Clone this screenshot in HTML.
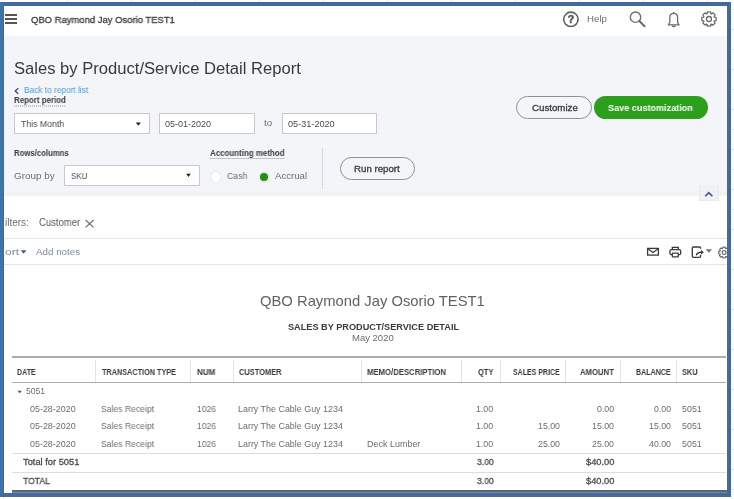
<!DOCTYPE html>
<html><head><meta charset="utf-8">
<style>
*{margin:0;padding:0;box-sizing:border-box}
html,body{width:734px;height:499px;overflow:hidden;background:#fff;font-family:"Liberation Sans",sans-serif}
.t{position:absolute;white-space:nowrap;line-height:1;transform-origin:0 0;will-change:transform}
.b{position:absolute}
</style></head><body>
<div class="b" style="left:4px;top:6px;width:723px;height:29px;background:#fff"></div>
<div class="b" style="left:4px;top:35px;width:723px;height:161px;background:linear-gradient(180deg,#fbfcfd 0,#f4f5f8 3px,#f4f5f8 156px,#f1f1f5 157px,#f2f2f6 160px,#f8f8fa 161px)"></div>
<div class="b" style="left:4px;top:196px;width:723px;height:297px;background:#fff"></div>
<div class="b" style="left:5px;top:14.3px;width:12px;height:1.7px;background:#555"></div>
<div class="b" style="left:5px;top:18.2px;width:12px;height:1.7px;background:#555"></div>
<div class="b" style="left:5px;top:22px;width:12px;height:1.7px;background:#555"></div>
<div class="b" style="left:14px;top:113px;width:136px;height:21px;background:#fff;border:1px solid #c6c9ce"></div>
<div class="b" style="left:159px;top:113px;width:96px;height:21px;background:#fff;border:1px solid #c6c9ce"></div>
<div class="b" style="left:282px;top:113px;width:95px;height:21px;background:#fff;border:1px solid #c6c9ce"></div>
<div class="b" style="left:64px;top:165px;width:136px;height:21px;background:#fff;border:1px solid #c6c9ce"></div>
<div class="b" style="left:322px;top:148px;width:1px;height:41px;background:#d4d7dc"></div>
<div class="b" style="left:340px;top:157px;width:75px;height:23px;border:1px solid #8d9096;border-radius:12px"></div>
<div class="b" style="left:516px;top:96px;width:76px;height:23px;border:1px solid #8d9096;border-radius:12px"></div>
<div class="b" style="left:594px;top:96px;width:114px;height:23px;background:#2ca01c;border-radius:12px"></div>
<div class="b" style="left:210px;top:171px;width:12px;height:12px;border-radius:50%;background:#fff;border:1px solid #e6e7ea"></div>
<div class="b" style="left:258.5px;top:171px;width:11.5px;height:11.5px;border-radius:50%;background:#dff2d8"></div>
<div class="b" style="left:260.3px;top:172.6px;width:8px;height:8px;border-radius:50%;background:#2b8a1e"></div>
<div class="b" style="left:699px;top:185px;width:20px;height:16px;background:#f0f1f4;border:1px solid #e8eaee;border-top:none"></div>
<div class="b" style="left:4px;top:238px;width:723px;height:1px;background:#e3e5e8"></div>
<div class="b" style="left:4px;top:264px;width:723px;height:1px;background:#e3e5e8"></div>
<div class="b" style="left:12px;top:356px;width:714px;height:2px;background:#a9acb1"></div>
<div class="b" style="left:12px;top:382px;width:714px;height:1px;background:#a9acb1"></div>
<div class="b" style="left:95px;top:360px;width:1px;height:22px;background:#e3e5e8"></div><div class="b" style="left:190px;top:360px;width:1px;height:22px;background:#e3e5e8"></div><div class="b" style="left:233px;top:360px;width:1px;height:22px;background:#e3e5e8"></div><div class="b" style="left:361px;top:360px;width:1px;height:22px;background:#e3e5e8"></div><div class="b" style="left:461px;top:360px;width:1px;height:22px;background:#e3e5e8"></div><div class="b" style="left:500px;top:360px;width:1px;height:22px;background:#e3e5e8"></div><div class="b" style="left:565px;top:360px;width:1px;height:22px;background:#e3e5e8"></div><div class="b" style="left:620px;top:360px;width:1px;height:22px;background:#e3e5e8"></div><div class="b" style="left:676px;top:360px;width:1px;height:22px;background:#e3e5e8"></div>
<div class="b" style="left:12px;top:453px;width:714px;height:1px;background:#dcdee1"></div>
<div class="b" style="left:12px;top:472px;width:714px;height:1px;background:#dcdee1"></div>
<div class="b" style="left:12px;top:490px;width:715px;height:2px;background:#5b6775"></div><div class="b" style="left:12px;top:492px;width:715px;height:1px;background:#7a8aa0"></div>
<div class="t" style="left:31.00px;top:15.07px;font-size:9.6px;color:#393a3d;transform:scaleX(0.986);-webkit-text-stroke:0.3px currentColor;">QBO Raymond Jay Osorio TEST1</div>
<div class="t" style="left:587.00px;top:13.59px;font-size:9.7px;color:#6b6c72;">Help</div>
<div class="t" style="left:14.00px;top:60.66px;font-size:16px;color:#393a3d;transform:scaleX(1.037);">Sales by Product/Service Detail Report</div>
<div class="t" style="left:23.70px;top:86.22px;font-size:8.6px;color:#4b9ad6;transform:scaleX(0.966);">Back to report list</div>
<div class="t" style="left:14.30px;top:96.56px;font-size:8.2px;color:#393a3d;font-weight:bold;transform:scaleX(0.965);">Report period</div>
<div class="t" style="left:20.80px;top:119.58px;font-size:9px;color:#4a4b50;transform:scaleX(0.970);">This Month</div>
<div class="t" style="left:165.30px;top:119.58px;font-size:9px;color:#4a4b50;">05-01-2020</div>
<div class="t" style="left:263.80px;top:117.66px;font-size:9.5px;color:#6b6c72;transform:scaleX(1.022);">to</div>
<div class="t" style="left:287.60px;top:119.58px;font-size:9px;color:#4a4b50;transform:scaleX(1.014);">05-31-2020</div>
<div class="t" style="left:14.10px;top:149.96px;font-size:8.2px;color:#393a3d;font-weight:bold;transform:scaleX(0.947);">Rows/columns</div>
<div class="t" style="left:14.10px;top:170.62px;font-size:9.9px;color:#6b6c72;">Group by</div>
<div class="t" style="left:70.60px;top:172.38px;font-size:9px;color:#4a4b50;transform:scaleX(0.886);">SKU</div>
<div class="t" style="left:209.60px;top:150.06px;font-size:8.2px;color:#393a3d;font-weight:bold;transform:scaleX(0.970);">Accounting method</div>
<div class="t" style="left:226.70px;top:170.86px;font-size:9.5px;color:#6b6c72;transform:scaleX(0.916);">Cash</div>
<div class="t" style="left:274.80px;top:170.86px;font-size:9.5px;color:#6b6c72;transform:scaleX(1.013);">Accrual</div>
<div class="t" style="left:354.00px;top:164.07px;font-size:9.6px;color:#393a3d;transform:scaleX(1.010);-webkit-text-stroke:0.3px currentColor;">Run report</div>
<div class="t" style="left:531.50px;top:102.67px;font-size:9.6px;color:#393a3d;transform:scaleX(1.012);-webkit-text-stroke:0.3px currentColor;">Customize</div>
<div class="t" style="left:608.40px;top:103.34px;font-size:9.4px;color:#ffffff;font-weight:bold;transform:scaleX(0.969);">Save customization</div>
<div class="t" style="left:5.40px;top:217.53px;font-size:10px;color:#6b6c72;">ilters:</div>
<div class="t" style="left:39.10px;top:217.53px;font-size:10px;color:#55565b;transform:scaleX(0.950);">Customer</div>
<div class="t" style="left:4.50px;top:246.57px;font-size:9.6px;color:#7d8b9c;transform:scaleX(1.250);">ort</div>
<div class="t" style="left:35.60px;top:246.57px;font-size:9.6px;color:#7d8b9c;transform:scaleX(1.020);">Add notes</div>
<div class="t" style="left:259.80px;top:294.11px;font-size:14.4px;color:#606166;transform:scaleX(1.027);">QBO Raymond Jay Osorio TEST1</div>
<div class="t" style="left:287.60px;top:323.18px;font-size:9px;color:#393a3d;font-weight:bold;transform:scaleX(1.018);">SALES BY PRODUCT/SERVICE DETAIL</div>
<div class="t" style="left:352.00px;top:333.16px;font-size:9.5px;color:#6b6c72;">May 2020</div>
<div class="t" style="left:17.00px;top:367.79px;font-size:8.4px;color:#393a3d;font-weight:bold;transform:scaleX(0.845);">DATE</div>
<div class="t" style="left:101.50px;top:367.79px;font-size:8.4px;color:#393a3d;font-weight:bold;transform:scaleX(0.869);">TRANSACTION TYPE</div>
<div class="t" style="left:196.90px;top:367.79px;font-size:8.4px;color:#393a3d;font-weight:bold;transform:scaleX(0.962);">NUM</div>
<div class="t" style="left:238.50px;top:367.79px;font-size:8.4px;color:#393a3d;font-weight:bold;transform:scaleX(0.887);">CUSTOMER</div>
<div class="t" style="left:367.30px;top:367.79px;font-size:8.4px;color:#393a3d;font-weight:bold;transform:scaleX(0.923);">MEMO/DESCRIPTION</div>
<div class="t" style="left:477.90px;top:367.79px;font-size:8.4px;color:#393a3d;font-weight:bold;transform:scaleX(0.892);">QTY</div>
<div class="t" style="left:512.70px;top:367.79px;font-size:8.4px;color:#393a3d;font-weight:bold;transform:scaleX(0.836);">SALES PRICE</div>
<div class="t" style="left:580.40px;top:367.79px;font-size:8.4px;color:#393a3d;font-weight:bold;transform:scaleX(0.922);">AMOUNT</div>
<div class="t" style="left:635.70px;top:367.79px;font-size:8.4px;color:#393a3d;font-weight:bold;transform:scaleX(0.847);">BALANCE</div>
<div class="t" style="left:682.00px;top:367.79px;font-size:8.4px;color:#393a3d;font-weight:bold;transform:scaleX(0.880);">SKU</div>
<div class="t" style="left:26.00px;top:386.62px;font-size:8.6px;color:#6b6c72;">5051</div>
<div class="t" style="left:30.00px;top:404.65px;font-size:8.8px;color:#6b6c72;transform:scaleX(1.013);">05-28-2020</div>
<div class="t" style="left:100.60px;top:404.65px;font-size:8.8px;color:#6b6c72;transform:scaleX(0.980);">Sales Receipt</div>
<div class="t" style="left:196.70px;top:404.65px;font-size:8.8px;color:#6b6c72;transform:scaleX(0.970);">1026</div>
<div class="t" style="left:237.50px;top:404.65px;font-size:8.8px;color:#6b6c72;transform:scaleX(1.013);">Larry The Cable Guy 1234</div>
<div class="t" style="left:476.48px;top:404.65px;font-size:8.8px;color:#6b6c72;">1.00</div>
<div class="t" style="left:597.08px;top:404.65px;font-size:8.8px;color:#6b6c72;">0.00</div>
<div class="t" style="left:653.78px;top:404.65px;font-size:8.8px;color:#6b6c72;">0.00</div>
<div class="t" style="left:682.10px;top:404.65px;font-size:8.8px;color:#6b6c72;transform:scaleX(1.011);">5051</div>
<div class="t" style="left:30.00px;top:422.05px;font-size:8.8px;color:#6b6c72;transform:scaleX(1.013);">05-28-2020</div>
<div class="t" style="left:100.60px;top:422.05px;font-size:8.8px;color:#6b6c72;transform:scaleX(0.980);">Sales Receipt</div>
<div class="t" style="left:196.70px;top:422.05px;font-size:8.8px;color:#6b6c72;transform:scaleX(0.970);">1026</div>
<div class="t" style="left:237.50px;top:422.05px;font-size:8.8px;color:#6b6c72;transform:scaleX(1.013);">Larry The Cable Guy 1234</div>
<div class="t" style="left:476.48px;top:422.05px;font-size:8.8px;color:#6b6c72;">1.00</div>
<div class="t" style="left:537.68px;top:422.05px;font-size:8.8px;color:#6b6c72;">15.00</div>
<div class="t" style="left:592.18px;top:422.05px;font-size:8.8px;color:#6b6c72;">15.00</div>
<div class="t" style="left:648.88px;top:422.05px;font-size:8.8px;color:#6b6c72;">15.00</div>
<div class="t" style="left:682.10px;top:422.05px;font-size:8.8px;color:#6b6c72;transform:scaleX(1.011);">5051</div>
<div class="t" style="left:30.00px;top:440.45px;font-size:8.8px;color:#6b6c72;transform:scaleX(1.013);">05-28-2020</div>
<div class="t" style="left:100.60px;top:440.45px;font-size:8.8px;color:#6b6c72;transform:scaleX(0.980);">Sales Receipt</div>
<div class="t" style="left:196.70px;top:440.45px;font-size:8.8px;color:#6b6c72;transform:scaleX(0.970);">1026</div>
<div class="t" style="left:237.50px;top:440.45px;font-size:8.8px;color:#6b6c72;transform:scaleX(1.013);">Larry The Cable Guy 1234</div>
<div class="t" style="left:366.80px;top:440.45px;font-size:8.8px;color:#6b6c72;transform:scaleX(1.020);">Deck Lumber</div>
<div class="t" style="left:476.48px;top:440.45px;font-size:8.8px;color:#6b6c72;">1.00</div>
<div class="t" style="left:537.68px;top:440.45px;font-size:8.8px;color:#6b6c72;">25.00</div>
<div class="t" style="left:592.18px;top:440.45px;font-size:8.8px;color:#6b6c72;">25.00</div>
<div class="t" style="left:648.88px;top:440.45px;font-size:8.8px;color:#6b6c72;">40.00</div>
<div class="t" style="left:682.10px;top:440.45px;font-size:8.8px;color:#6b6c72;transform:scaleX(1.011);">5051</div>
<div class="t" style="left:22.50px;top:457.61px;font-size:9.2px;color:#4a4b50;transform:scaleX(1.013);-webkit-text-stroke:0.3px currentColor;">Total for 5051</div>
<div class="t" style="left:476.80px;top:457.61px;font-size:9.2px;color:#4a4b50;transform:scaleX(0.938);-webkit-text-stroke:0.3px currentColor;">3.00</div>
<div class="t" style="left:585.80px;top:457.61px;font-size:9.2px;color:#4a4b50;transform:scaleX(1.009);-webkit-text-stroke:0.3px currentColor;">$40.00</div>
<div class="t" style="left:22.50px;top:476.91px;font-size:9.2px;color:#4a4b50;transform:scaleX(0.934);-webkit-text-stroke:0.3px currentColor;">TOTAL</div>
<div class="t" style="left:476.80px;top:476.91px;font-size:9.2px;color:#4a4b50;transform:scaleX(0.938);-webkit-text-stroke:0.3px currentColor;">3.00</div>
<div class="t" style="left:585.80px;top:476.91px;font-size:9.2px;color:#4a4b50;transform:scaleX(1.009);-webkit-text-stroke:0.3px currentColor;">$40.00</div>
<svg class="b" style="left:0;top:0" width="734" height="499" viewBox="0 0 734 499"><polyline points="18.3,88.3 15.2,91 18.3,93.7" fill="none" stroke="#3f4b78" stroke-width="1.3"/><circle cx="570.9" cy="19.3" r="7.2" fill="none" stroke="#5f6066" stroke-width="1.6"/><text x="570.9" y="23.2" font-size="10.5" font-weight="bold" text-anchor="middle" fill="#55565b" stroke="#55565b" stroke-width="0.5" font-family="Liberation Sans">?</text><circle cx="635.5" cy="17.2" r="5.2" fill="none" stroke="#6b6c72" stroke-width="1.4"/><line x1="639.3" y1="21" x2="644.6" y2="26.2" stroke="#6b6c72" stroke-width="2" stroke-linecap="round"/><path d="M668.3,24.8 L669.8,22.6 L669.8,17.6 C669.8,15.1 671.5,13.4 673.7,13.4 C675.9,13.4 677.6,15.1 677.6,17.6 L677.6,22.6 L679.1,24.8 Z" fill="none" stroke="#6b6c72" stroke-width="1.3" stroke-linejoin="round"/><line x1="673.7" y1="12" x2="673.7" y2="13.4" stroke="#6b6c72" stroke-width="1.2"/><path d="M672.2,25.2 A1.5,1.5 0 0 0 675.2,25.2" fill="none" stroke="#6b6c72" stroke-width="1.2"/><path d="M714.26,17.08 L716.14,17.48 L716.14,20.52 L714.26,20.92 L714.08,21.37 L715.12,22.98 L712.98,25.12 L711.37,24.08 L710.92,24.26 L710.52,26.14 L707.48,26.14 L707.08,24.26 L706.63,24.08 L705.02,25.12 L702.88,22.98 L703.92,21.37 L703.74,20.92 L701.86,20.52 L701.86,17.48 L703.74,17.08 L703.92,16.63 L702.88,15.02 L705.02,12.88 L706.63,13.92 L707.08,13.74 L707.48,11.86 L710.52,11.86 L710.92,13.74 L711.37,13.92 L712.98,12.88 L715.12,15.02 L714.08,16.63 Z" fill="none" stroke="#6b6c72" stroke-width="1.3" stroke-linejoin="round"/><circle cx="709" cy="19" r="2.5" fill="none" stroke="#6b6c72" stroke-width="1.3"/><polygon points="135.8,122.6 140.9,122.6 138.35,125.8" fill="#222"/><polygon points="186.2,173.7 190.8,173.7 188.5,176.9" fill="#222"/><line x1="14.2" y1="106" x2="66.2" y2="106" stroke="#8d9096" stroke-width="1" stroke-dasharray="1,1"/><line x1="209.6" y1="158.5" x2="284.3" y2="158.5" stroke="#8d9096" stroke-width="1" stroke-dasharray="1,1"/><polyline points="705.2,196.2 708.8,192.6 712.4,196.2" fill="none" stroke="#3d5589" stroke-width="1.6"/><path d="M85.6,220 L93.6,227.4 M93.6,220 L85.6,227.4" stroke="#707177" stroke-width="1.25"/><polygon points="20.8,250.3 26.4,250.3 23.6,253.7" fill="#3f5a80"/><rect x="647.6" y="248.4" width="10.8" height="6.7" fill="none" stroke="#393a3d" stroke-width="1.3"/><polyline points="647.8,248.8 653,252.4 658.2,248.8" fill="none" stroke="#393a3d" stroke-width="1.2"/><path d="M672.3,249.6 V247.3 H678.3 V249.6" fill="none" stroke="#393a3d" stroke-width="1.3"/><rect x="669.9" y="249.7" width="10.8" height="5" rx="1.5" fill="none" stroke="#393a3d" stroke-width="1.3"/><rect x="672.3" y="253.2" width="6" height="3.6" rx="0.6" fill="#fff" stroke="#393a3d" stroke-width="1.3"/><path d="M700.6,248.7 V248.1 Q700.6,247 699.5,247 H693.4 Q692.3,247 692.3,248.1 V256.2 Q692.3,257.3 693.4,257.3 H699.5 Q700.6,257.3 700.6,256.2 V254.7" fill="none" stroke="#393a3d" stroke-width="1.35"/><path d="M696.3,255.3 C696.7,253.1 698.5,252.2 701.4,252.2" fill="none" stroke="#393a3d" stroke-width="1.35"/><polygon points="701,249.9 703.9,252.2 701,254.5" fill="#393a3d"/><polygon points="705.8,249.2 712,249.2 708.9,252.7" fill="#707177"/><path d="M728.14,251.13 L729.48,251.46 L729.48,253.74 L728.14,254.07 L728.00,254.42 L728.71,255.60 L727.10,257.21 L725.92,256.50 L725.57,256.64 L725.24,257.98 L722.96,257.98 L722.63,256.64 L722.28,256.50 L721.10,257.21 L719.49,255.60 L720.20,254.42 L720.06,254.07 L718.72,253.74 L718.72,251.46 L720.06,251.13 L720.20,250.78 L719.49,249.60 L721.10,247.99 L722.28,248.70 L722.63,248.56 L722.96,247.22 L725.24,247.22 L725.57,248.56 L725.92,248.70 L727.10,247.99 L728.71,249.60 L728.00,250.78 Z" fill="none" stroke="#6b6c72" stroke-width="1.2" stroke-linejoin="round"/><circle cx="724.1" cy="252.6" r="1.9" fill="none" stroke="#6b6c72" stroke-width="1.2"/><polygon points="17.5,390.8 21.9,390.8 19.7,393.3" fill="#555"/></svg>
<div class="b" style="left:67px;top:0;width:1px;height:2px;background:#e6e8e0"></div><div class="b" style="left:131px;top:0;width:1px;height:2px;background:#e6e8e0"></div><div class="b" style="left:195px;top:0;width:1px;height:2px;background:#e6e8e0"></div><div class="b" style="left:259px;top:0;width:1px;height:2px;background:#e6e8e0"></div><div class="b" style="left:323px;top:0;width:1px;height:2px;background:#e6e8e0"></div><div class="b" style="left:387px;top:0;width:1px;height:2px;background:#e6e8e0"></div><div class="b" style="left:451px;top:0;width:1px;height:2px;background:#e6e8e0"></div><div class="b" style="left:515px;top:0;width:1px;height:2px;background:#e6e8e0"></div><div class="b" style="left:579px;top:0;width:1px;height:2px;background:#e6e8e0"></div><div class="b" style="left:643px;top:0;width:1px;height:2px;background:#e6e8e0"></div><div class="b" style="left:707px;top:0;width:1px;height:2px;background:#e6e8e0"></div><div class="b" style="left:731px;top:9px;width:3px;height:1px;background:#dfe3d8"></div><div class="b" style="left:731px;top:29px;width:3px;height:1px;background:#dfe3d8"></div><div class="b" style="left:731px;top:49px;width:3px;height:1px;background:#dfe3d8"></div><div class="b" style="left:731px;top:69px;width:3px;height:1px;background:#dfe3d8"></div><div class="b" style="left:731px;top:89px;width:3px;height:1px;background:#dfe3d8"></div><div class="b" style="left:731px;top:109px;width:3px;height:1px;background:#dfe3d8"></div><div class="b" style="left:731px;top:129px;width:3px;height:1px;background:#dfe3d8"></div><div class="b" style="left:731px;top:149px;width:3px;height:1px;background:#dfe3d8"></div><div class="b" style="left:731px;top:169px;width:3px;height:1px;background:#dfe3d8"></div><div class="b" style="left:731px;top:189px;width:3px;height:1px;background:#dfe3d8"></div><div class="b" style="left:731px;top:209px;width:3px;height:1px;background:#dfe3d8"></div><div class="b" style="left:731px;top:229px;width:3px;height:1px;background:#dfe3d8"></div><div class="b" style="left:731px;top:249px;width:3px;height:1px;background:#dfe3d8"></div><div class="b" style="left:731px;top:269px;width:3px;height:1px;background:#dfe3d8"></div><div class="b" style="left:731px;top:289px;width:3px;height:1px;background:#dfe3d8"></div><div class="b" style="left:731px;top:309px;width:3px;height:1px;background:#dfe3d8"></div><div class="b" style="left:731px;top:329px;width:3px;height:1px;background:#dfe3d8"></div><div class="b" style="left:731px;top:349px;width:3px;height:1px;background:#dfe3d8"></div><div class="b" style="left:731px;top:369px;width:3px;height:1px;background:#dfe3d8"></div><div class="b" style="left:731px;top:389px;width:3px;height:1px;background:#dfe3d8"></div><div class="b" style="left:731px;top:409px;width:3px;height:1px;background:#dfe3d8"></div><div class="b" style="left:731px;top:429px;width:3px;height:1px;background:#dfe3d8"></div><div class="b" style="left:731px;top:449px;width:3px;height:1px;background:#dfe3d8"></div><div class="b" style="left:731px;top:469px;width:3px;height:1px;background:#dfe3d8"></div><div class="b" style="left:731px;top:489px;width:3px;height:1px;background:#dfe3d8"></div><div class="b" style="left:3px;top:497px;width:1px;height:2px;background:#e6e8e0"></div>
<div class="b" style="left:0;top:2px;width:731px;height:4px;background:#44699c"></div>
<div class="b" style="left:0;top:2px;width:4px;height:495px;background:linear-gradient(90deg,#3f74a8 0,#3f74a8 2.5px,#3d6595 4px)"></div>
<div class="b" style="left:727px;top:2px;width:4px;height:495px;background:#44699c"></div>
<div class="b" style="left:0;top:493px;width:731px;height:4px;background:#44699c"></div>
</body></html>
